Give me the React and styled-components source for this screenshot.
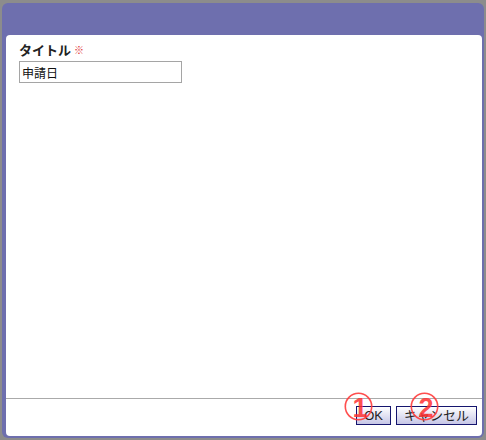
import React from "react";
import styled, { createGlobalStyle } from "styled-components";

const GlobalStyle = createGlobalStyle`
  html, body {
    margin: 0;
    padding: 0;
    background: #8c8c8c;
  }
  body {
    font-family: "Liberation Sans", "Noto Sans CJK JP", sans-serif;
  }
  * {
    box-sizing: border-box;
  }
`;

const Dialog = styled.div`
  margin: 3px 2px 2px 2px;
  width: 482px;
  height: 435px;
  padding: 32px 2px 2px 4px;
  display: flex;
  flex-direction: column;
  background: #6e6fae;
  border-radius: 6px;
`;

const Panel = styled.div`
  flex: 1;
  display: flex;
  flex-direction: column;
  background: #fff;
  border-radius: 4px;
`;

const Body = styled.div`
  flex: 1;
  padding: 6px 13px;
`;

const Label = styled.div`
  display: flex;
  align-items: center;
  gap: 3px;
  height: 16px;
  font-family: "Noto Sans CJK JP", sans-serif;
  font-size: 13px;
  font-weight: bold;
  color: #222;
`;

const Required = styled.span`
  font-size: 10px;
  font-weight: normal;
  color: #e03030;
`;

const Input = styled.input`
  display: block;
  margin-top: 4px;
  width: 163px;
  height: 22px;
  padding: 0 2px;
  border: 1px solid #a5a5a5;
  font-family: "Noto Sans CJK JP", sans-serif;
  font-size: 12px;
  color: #111;
  outline: none;
`;

const Footer = styled.div`
  height: 38px;
  display: flex;
  justify-content: flex-end;
  align-items: flex-start;
  gap: 5px;
  padding: 7px 5px 0 0;
  border-top: 1px solid #aaa;
`;

const ButtonWrap = styled.div`
  position: relative;
`;

const Button = styled.button`
  height: 19px;
  padding: 0 7px;
  border: 1px solid #15156e;
  background: linear-gradient(#ffffff, #c6c6e6);
  font-family: "Liberation Sans", "Noto Sans CJK JP", sans-serif;
  font-size: 13px;
  line-height: 17px;
  color: #222;
  cursor: pointer;
`;

const Marker = styled.svg`
  position: absolute;
  top: -14px;
  left: ${(p) => p.$left}px;
  width: 30px;
  height: 30px;
  pointer-events: none;
`;

const Badge = ({ n, left }) => (
  <Marker $left={left} viewBox="0 0 30 30">
    <circle cx="14.5" cy="14.5" r="13.2" fill="none" stroke="#ff3b3b" strokeWidth="1.6" opacity="0.9" />
    <text
      x="16"
      y="25"
      textAnchor="middle"
      fontFamily="Liberation Sans, sans-serif"
      fontWeight="bold"
      fontSize="27"
      fill="#ff3030"
      fillOpacity="0.85"
    >
      {n}
    </text>
  </Marker>
);

export default function App() {
  return (
    <>
      <GlobalStyle />
      <Dialog>
        <Panel>
          <Body>
            <Label>
              タイトル<Required>※</Required>
            </Label>
            <Input defaultValue="申請日" />
          </Body>
          <Footer>
            <ButtonWrap>
              <Button>OK</Button>
              <Badge n="1" left={-12} />
            </ButtonWrap>
            <ButtonWrap>
              <Button>キャンセル</Button>
              <Badge n="2" left={14} />
            </ButtonWrap>
          </Footer>
        </Panel>
      </Dialog>
    </>
  );
}
